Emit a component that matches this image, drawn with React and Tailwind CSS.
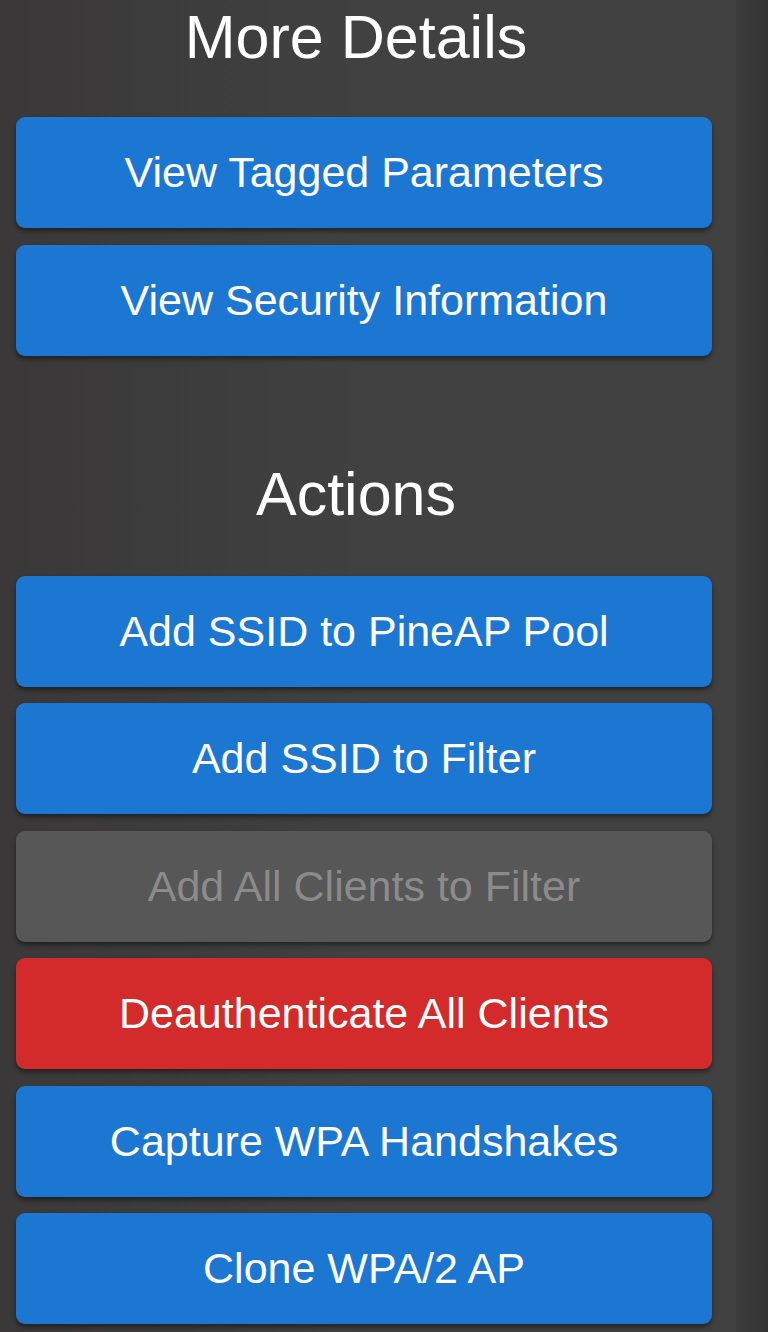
import React from "react";

function Btn({ children, variant = "blue" }) {
  const base =
    "w-[696px] h-[111px] rounded-[9px] flex items-center justify-center text-[43px] leading-none shadow-[0_3px_5px_rgba(0,0,0,0.45)]";
  const styles = {
    blue: "bg-[#1c77d3] text-white",
    red: "bg-[#d32b2b] text-white",
    gray: "bg-[#575757] text-[#8b8b8b]",
  };
  return (
    <button className={`${base} ${styles[variant]}`} style={{ fontFamily: '"Liberation Sans", Arial, sans-serif' }}>
      {children}
    </button>
  );
}

export default function App() {
  return (
    <div
      className="w-[768px] h-[1332px] overflow-hidden flex bg-[#404040]"
      style={{ fontFamily: '"Liberation Sans", Arial, sans-serif' }}
    >
      <div className="w-[736px] flex flex-col bg-gradient-to-r from-[#3a3838] via-[#414141] to-[#414141]">
        <div className="w-[712px] pt-[7px]">
          <h2 className="text-[61px] leading-[61px] text-white text-center font-normal">More Details</h2>
        </div>
        <div className="pl-[16px] pt-[49px] flex flex-col gap-[16.5px]">
          <Btn>View Tagged Parameters</Btn>
          <Btn>View Security Information</Btn>
        </div>
        <div className="w-[712px] pt-[108px]">
          <h2 className="text-[61px] leading-[61px] text-white text-center font-normal">Actions</h2>
        </div>
        <div className="pl-[16px] pt-[51px] flex flex-col gap-[16.5px]">
          <Btn>Add SSID to PineAP Pool</Btn>
          <Btn>Add SSID to Filter</Btn>
          <Btn variant="gray">Add All Clients to Filter</Btn>
          <Btn variant="red">Deauthenticate All Clients</Btn>
          <Btn>Capture WPA Handshakes</Btn>
          <Btn>Clone WPA/2 AP</Btn>
        </div>
      </div>
      <div className="flex-1 bg-gradient-to-r from-[#3c3c3c] to-[#333333]" />
    </div>
  );
}
